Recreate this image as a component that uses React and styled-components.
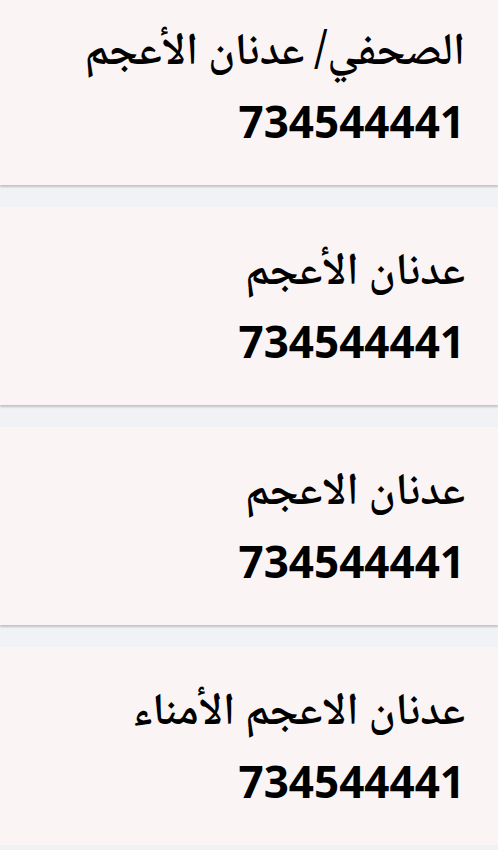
import styled, { createGlobalStyle } from 'styled-components'

const GlobalStyle = createGlobalStyle`
  html, body {
    margin: 0;
    padding: 0;
    background: #f0f2f5;
    overflow: hidden;
  }
`

const contacts = [
  { name: 'الصحفي/ عدنان الأعجم', phone: '734544441' },
  { name: 'عدنان الأعجم', phone: '734544441' },
  { name: 'عدنان الاعجم', phone: '734544441' },
  { name: 'عدنان الاعجم الأمناء', phone: '734544441' },
]

const App = () => {
  return (
    <>
      <GlobalStyle />
      <List>
        {contacts.map((item, id) => (
          <Card key={id}>
            <Name>{item.name}</Name>
            <Phone>{item.phone}</Phone>
          </Card>
        ))}
      </List>
    </>
  )
}

export default App

const List = styled.div`
  display: flex;
  flex-direction: column;
  gap: 22px;
  margin-top: -13px;
  direction: rtl;
`

const Card = styled.div`
  height: 198px;
  box-sizing: border-box;
  background-color: #faf4f4;
  box-shadow: 0 2px 2px rgba(0, 0, 0, 0.2);
  padding: 38px 33px 0 33px;
  display: flex;
  flex-direction: column;
  gap: 6px;
  color: #000;
  font-family: "Noto Naskh Arabic", "Noto Sans", sans-serif;
`

const Name = styled.div`
  font-size: 45px;
  font-weight: 620;
  line-height: 60px;
`

const Phone = styled.div`
  font-family: "Noto Sans", sans-serif;
  font-size: 44px;
  font-weight: 700;
  line-height: 60px;
  direction: ltr;
  text-align: right;
`
